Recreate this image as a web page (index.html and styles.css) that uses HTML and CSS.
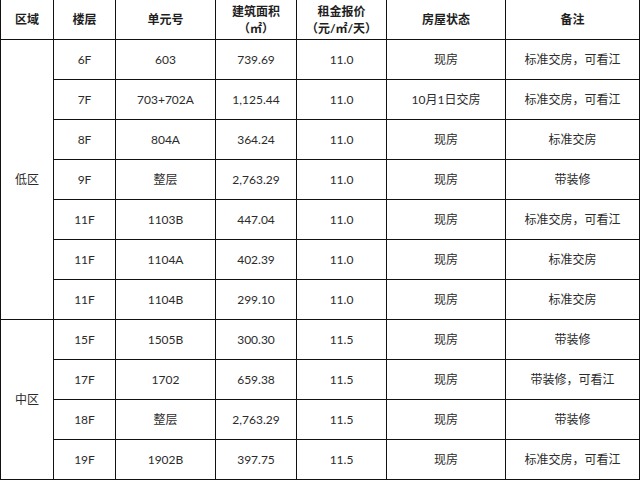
FILE: index.html
```html
<!DOCTYPE html>
<html lang="zh-CN">
<head>
<meta charset="utf-8">
<title>租金报价</title>
<link rel="stylesheet" href="styles.css">
</head>
<body>
<table class="grid">
  <colgroup>
    <col class="c1"><col class="c2"><col class="c3"><col class="c4"><col class="c5"><col class="c6"><col class="c7">
  </colgroup>
  <thead>
    <tr class="head">
      <th>区域</th>
      <th>楼层</th>
      <th>单元号</th>
      <th>建筑面积<br>（㎡）</th>
      <th>租金报价<br>（元/㎡/天）</th>
      <th>房屋状态</th>
      <th>备注</th>
    </tr>
  </thead>
  <tbody>
    <tr><td class="zone" rowspan="7">低区</td><td>6F</td><td>603</td><td>739.69</td><td>11.0</td><td>现房</td><td>标准交房，可看江</td></tr>
    <tr><td>7F</td><td>703+702A</td><td>1,125.44</td><td>11.0</td><td>10月1日交房</td><td>标准交房，可看江</td></tr>
    <tr><td>8F</td><td>804A</td><td>364.24</td><td>11.0</td><td>现房</td><td>标准交房</td></tr>
    <tr><td>9F</td><td>整层</td><td>2,763.29</td><td>11.0</td><td>现房</td><td>带装修</td></tr>
    <tr><td>11F</td><td>1103B</td><td>447.04</td><td>11.0</td><td>现房</td><td>标准交房，可看江</td></tr>
    <tr><td>11F</td><td>1104A</td><td>402.39</td><td>11.0</td><td>现房</td><td>标准交房</td></tr>
    <tr><td>11F</td><td>1104B</td><td>299.10</td><td>11.0</td><td>现房</td><td>标准交房</td></tr>
    <tr><td class="zone" rowspan="5">中区</td><td>15F</td><td>1505B</td><td>300.30</td><td>11.5</td><td>现房</td><td>带装修</td></tr>
    <tr><td>17F</td><td>1702</td><td>659.38</td><td>11.5</td><td>现房</td><td>带装修，可看江</td></tr>
    <tr><td>18F</td><td>整层</td><td>2,763.29</td><td>11.5</td><td>现房</td><td>带装修</td></tr>
    <tr><td>19F</td><td>1902B</td><td>397.75</td><td>11.5</td><td>现房</td><td>标准交房，可看江</td></tr>
  </tbody>
</table>
</body>
</html>
```
FILE: styles.css
```css
html, body {
  margin: 0;
  padding: 0;
  background: #ffffff;
}
.grid {
  border-collapse: collapse;
  table-layout: fixed;
  width: 639px;
  font-family: "Lato", "Noto Sans CJK SC", sans-serif;
  font-size: 12px;
  color: #2b2b2b;
}
.c1 { width: 53px; }
.c2 { width: 62px; }
.c3 { width: 100px; }
.c4 { width: 81px; }
.c5 { width: 90px; }
.c6 { width: 119px; }
.c7 { width: 134px; }
.grid th,
.grid td {
  border: 1px solid #111111;
  padding: 0;
  text-align: center;
  vertical-align: middle;
}
.grid th {
  border-top: none;
  height: 39px;
  font-weight: bold;
  color: #1e1e1e;
  line-height: 17px;
}
.grid td {
  height: 39px;
  line-height: 16px;
}
```
